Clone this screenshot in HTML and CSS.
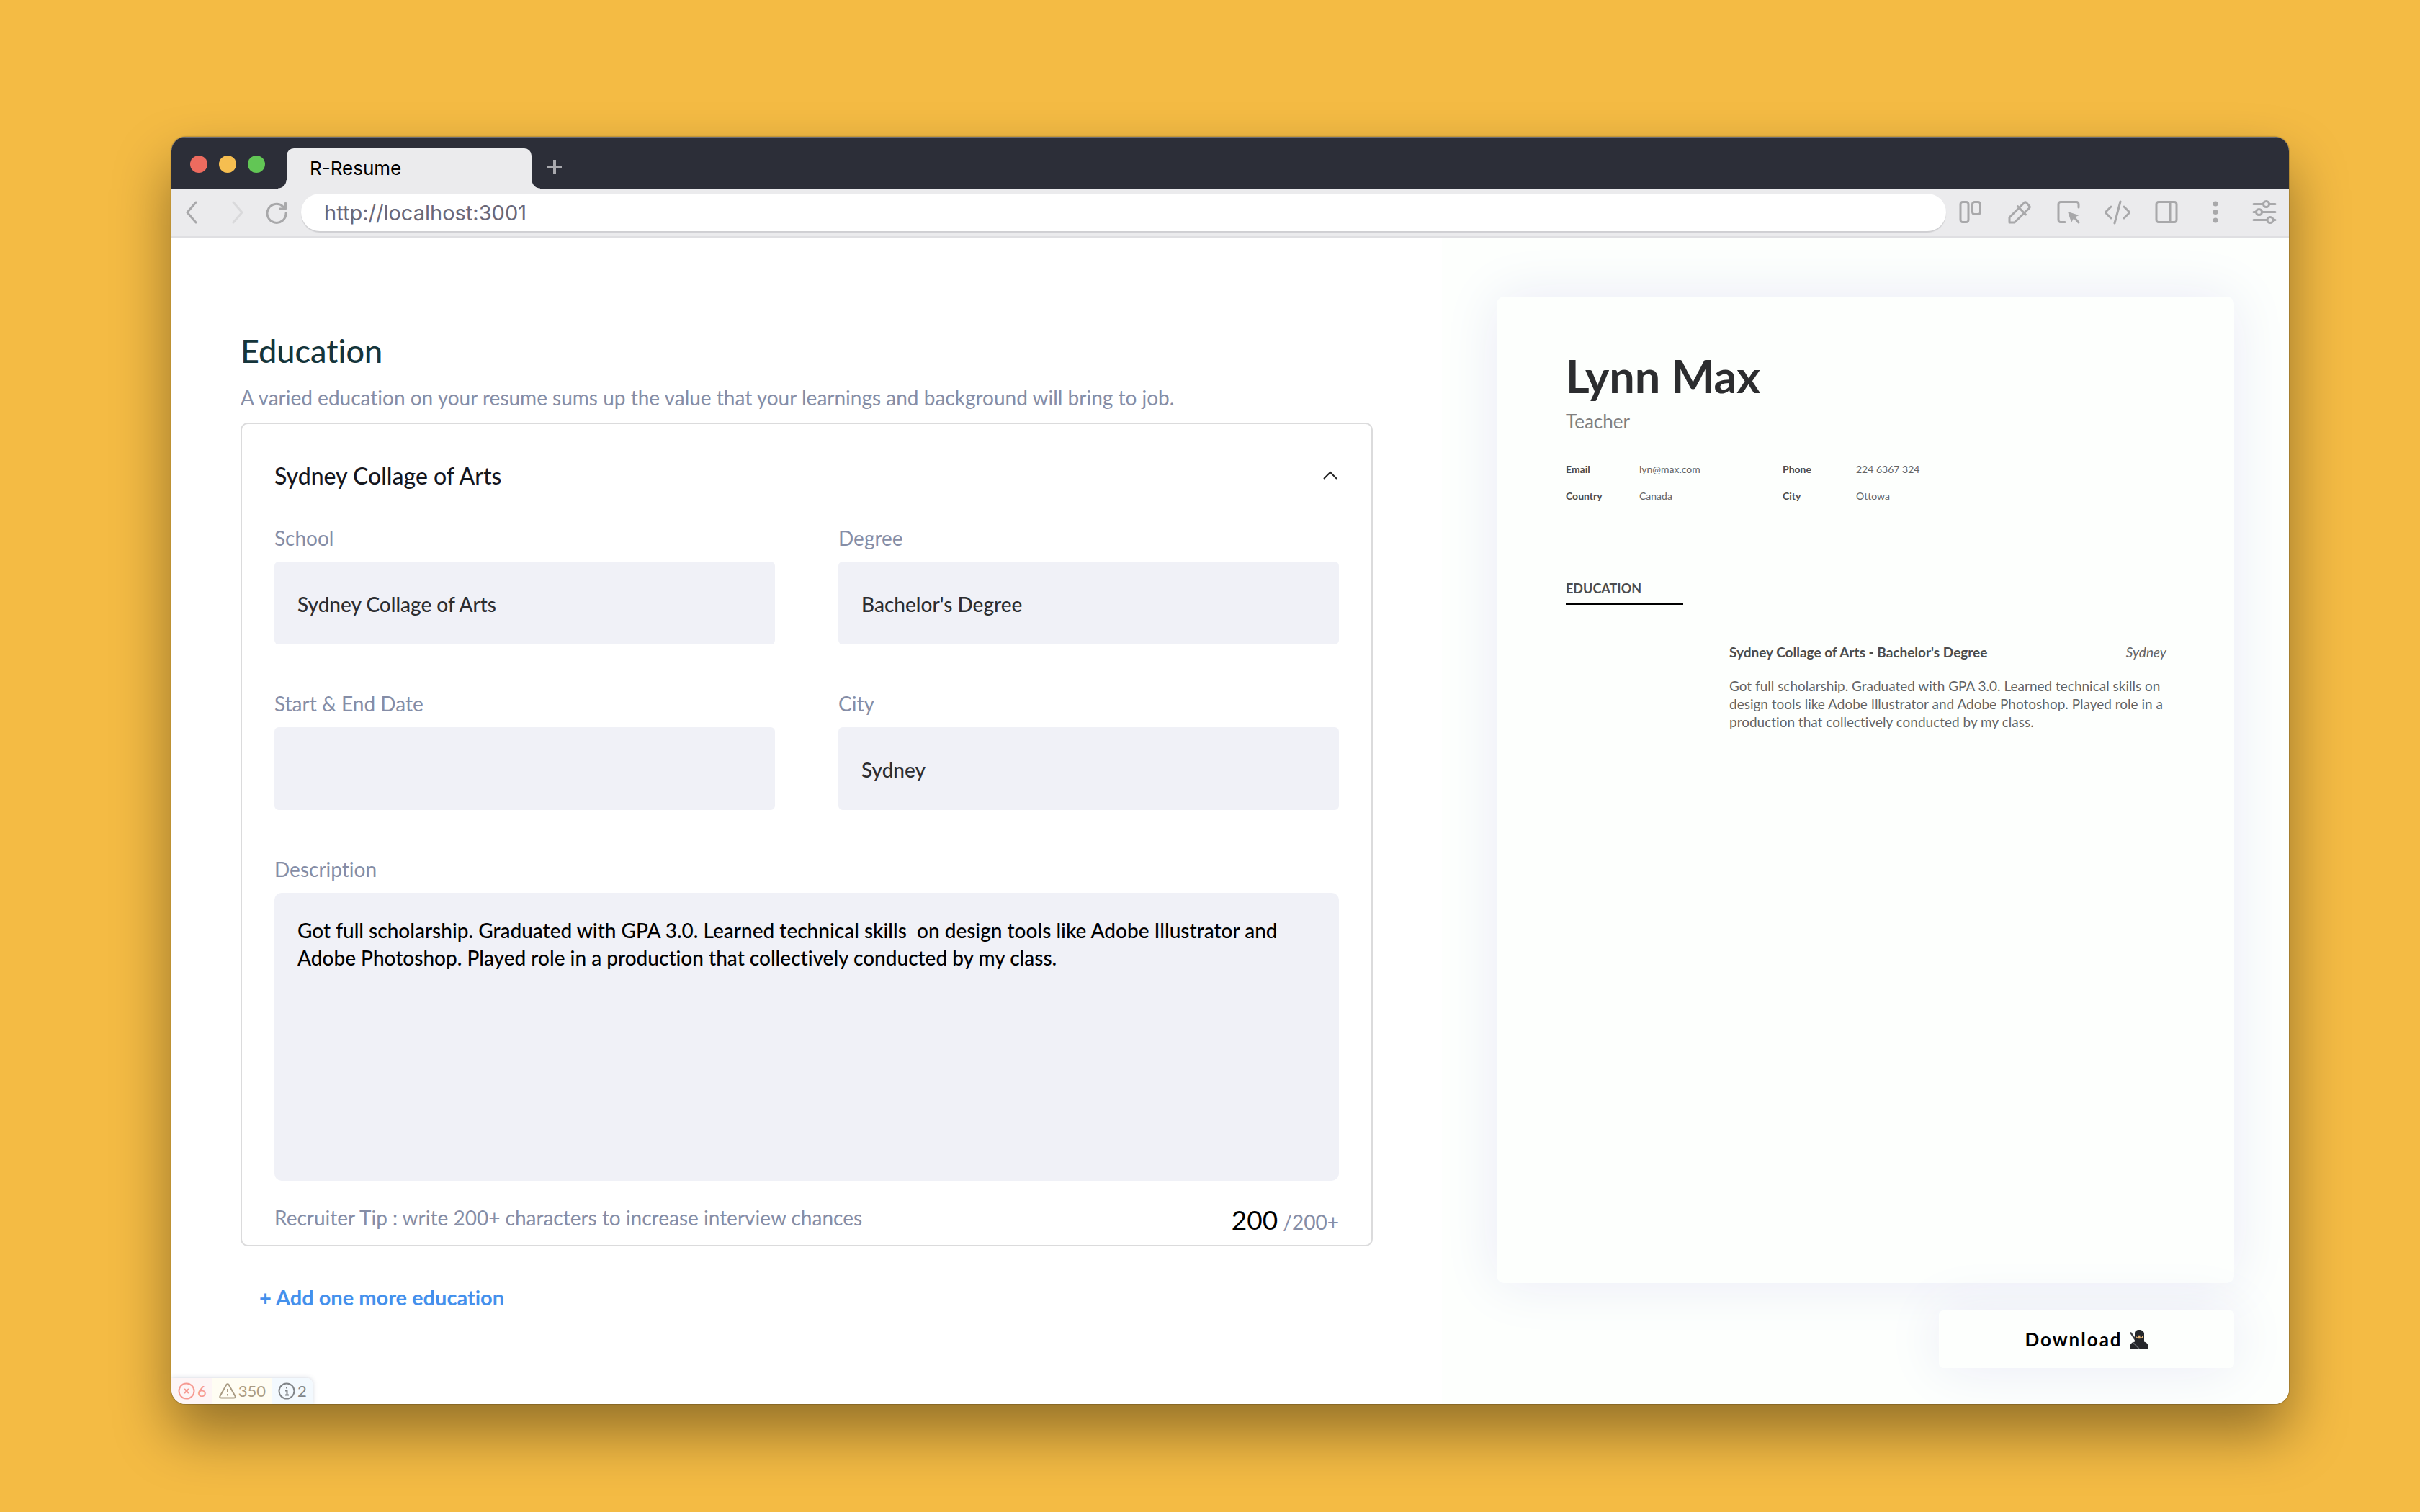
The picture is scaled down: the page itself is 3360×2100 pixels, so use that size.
FILE: index.html
```html
<!DOCTYPE html>
<html lang="en">
<head>
<meta charset="utf-8">
<meta name="viewport" content="width=device-width, initial-scale=1">
<title>R-Resume</title>
<link rel="stylesheet" href="styles.css">
</head>
<body>
<div class="window">
  <header class="tabbar">
    <div class="lights"><span class="light red"></span><span class="light amber"></span><span class="light green"></span></div>
    <div class="tab">R-Resume</div>
    <button class="new-tab" type="button" aria-label="New tab">
      <svg width="20" height="20" viewBox="0 0 20 20"><path d="M10 0v20M0 10h20" stroke="#a9a9ae" stroke-width="4"/></svg>
    </button>
  </header>
  <nav class="toolbar">
    <div class="history">
      <button type="button" aria-label="Back"><svg width="18" height="32" viewBox="0 0 18 32"><path d="M15 2 3 16l12 14"/></svg></button>
      <button type="button" class="dim" aria-label="Forward"><svg width="18" height="32" viewBox="0 0 18 32"><path d="m3 2 12 14L3 30"/></svg></button>
      <button type="button" aria-label="Reload"><svg width="32" height="32" viewBox="0 0 32 32"><path d="M29 17a13 13 0 1 1-4-9l3 3M28.500 3v8h-8"/></svg></button>
    </div>
    <input class="address" type="text" aria-label="Address" value="http://localhost:3001">
    <div class="tools">
      <button type="button" aria-label="Columns"><svg width="36" height="36" viewBox="0 0 36 36"><rect x="4" y="3.500" width="11" height="28" rx="3"/><rect x="20.500" y="3.500" width="11" height="17" rx="3"/></svg></button>
      <button type="button" aria-label="Pick colour"><svg width="36" height="36" viewBox="0 0 36 36"><path d="M4 32v-7l20.500-20.500q1.500-1.500 3 0l4 4.500q1.500 1.500 0 3L11 32zM15.500 9.500l11 11.500"/></svg></button>
      <button type="button" aria-label="Select element"><svg width="36" height="36" viewBox="0 0 36 36"><path d="M13 31.500H7a3 3 0 0 1-3-3V6.500a3 3 0 0 1 3-3h22a3 3 0 0 1 3 3V11M25 24l7 8"/><path class="solid" d="m17 17 15.500 5-6.500 3-4 7z"/></svg></button>
      <button type="button" aria-label="View source"><svg width="36" height="36" viewBox="0 0 36 36"><path d="m9 10-8 8 8 8M27 10l8 8-8 8M22 3l-8 30"/></svg></button>
      <button type="button" aria-label="Side panel"><svg width="36" height="36" viewBox="0 0 36 36"><rect x="4" y="3.500" width="28" height="28" rx="3"/><path d="M23 4v27"/></svg></button>
      <button type="button" aria-label="More"><svg width="36" height="36" viewBox="0 0 36 36"><g class="solid"><circle cx="18" cy="6" r="3.500"/><circle cx="18" cy="17.500" r="3.500"/><circle cx="18" cy="29" r="3.500"/></g></svg></button>
      <button type="button" aria-label="Settings"><svg width="36" height="36" viewBox="0 0 36 36"><path d="M3 6.500h13M25 6.500h8M3 17.500h3M15 17.500h18M3 28.500h18M30 28.500h3"/><circle cx="20.500" cy="6.500" r="4"/><circle cx="10.500" cy="17.500" r="4"/><circle cx="26" cy="28.500" r="4"/></svg></button>
    </div>
  </nav>
  <main class="app">
    <section class="editor">
      <h1>Education</h1>
      <p class="lead">A varied education on your resume sums up the value that your learnings and background will bring to job.</p>
      <form class="card">
        <div class="card-head">
          <h2>Sydney Collage of Arts</h2>
          <button type="button" class="toggle" aria-label="Collapse"><svg width="22" height="14" viewBox="0 0 22 14"><path d="m1 11 9-9 9 9" fill="none" stroke="#222" stroke-width="2"/></svg></button>
        </div>
        <div class="fields">
          <div class="field"><label for="school">School</label><input id="school" type="text" value="Sydney Collage of Arts"></div>
          <div class="field"><label for="degree">Degree</label><input id="degree" type="text" value="Bachelor's Degree"></div>
          <div class="field"><label for="dates">Start &amp; End Date</label><input id="dates" type="text"></div>
          <div class="field"><label for="city">City</label><input id="city" type="text" value="Sydney"></div>
          <div class="field wide"><label for="description">Description</label><textarea id="description">Got full scholarship. Graduated with GPA 3.0. Learned technical skills  on design tools like Adobe Illustrator and Adobe Photoshop. Played role in a production that collectively conducted by my class.</textarea></div>
        </div>
        <div class="card-foot">
          <p>Recruiter Tip : write 200+ characters to increase interview chances</p>
          <p class="counter"><strong>200</strong> /200+</p>
        </div>
      </form>
      <button type="button" class="add">+ Add one more education</button>
    </section>
    <aside class="preview">
      <article class="resume">
        <h2 class="name">Lynn Max</h2>
        <p class="role">Teacher</p>
        <dl class="contact">
          <dt>Email</dt><dd>lyn@max.com</dd><dt>Phone</dt><dd>224 6367 324</dd>
          <dt>Country</dt><dd>Canada</dd><dt>City</dt><dd>Ottowa</dd>
        </dl>
        <h3 class="section-title">EDUCATION</h3>
        <div class="entry">
          <div class="entry-head"><h4>Sydney Collage of Arts - Bachelor's Degree</h4><em>Sydney</em></div>
          <p>Got full scholarship. Graduated with GPA 3.0. Learned technical skills on design tools like Adobe Illustrator and Adobe Photoshop. Played role in a production that collectively conducted by my class.</p>
        </div>
      </article>
      <button type="button" class="download">Download
        <svg width="26" height="26" viewBox="0 0 26 26"><path d="M0 4l2-1 13 19-2 2z" fill="#3b3c40"/><path d="M0 26c0-6 2-8 7-9.500V5C7 1.500 9.500 0 13 0s6.500 1.500 7 5v11.500c4 1.500 6 3.500 6 9.500z" fill="#25272b"/><path d="M8.500 8.500q4.500-1.500 9.500 0v3q-5 1.500-9.500 0z" fill="#e9b878"/><path d="M9.500 9.500h2.500M14.500 9.500H17" stroke="#25272b" stroke-width="1.500"/><path d="m4 17 9 9" stroke="#66696f" stroke-width="1.500"/></svg>
      </button>
    </aside>
    <div class="status">
      <span class="errors"><svg width="24" height="24" viewBox="0 0 24 24"><circle cx="12" cy="12" r="10.500"/><path d="m9 9 6 6M15 9l-6 6"/></svg>6</span>
      <span class="warnings"><svg width="24" height="24" viewBox="0 0 24 24"><path d="M10.500 3a2 2 0 0 1 3 0l9 16q1 2.500-2 2.500h-17q-3 0-2-2.500zM12 9v4M12 16v2.500"/></svg>350</span>
      <span class="infos"><svg width="24" height="24" viewBox="0 0 24 24"><circle cx="12" cy="12" r="10.500"/><path d="M12 6.500v2M10 11.500h2.500v6M10 17.500h5"/></svg>2</span>
    </div>
  </main>
</div>
</body>
</html>
```
FILE: styles.css
```css
* { box-sizing: border-box; margin: 0; padding: 0; }

body {
  min-height: 100vh;
  display: flex;
  padding: 190px 182px 150px 238px;
  background: #f4bb44;
  font: 400 28px/36px Lato, "Noto Sans", sans-serif;
  font-variant-ligatures: none;
  color: #000;
}

button { border: 0; background: none; font: inherit; color: inherit; }
svg { display: block; flex: none; }

.window {
  flex: 1;
  min-width: 0;
  display: flex;
  flex-direction: column;
  border-radius: 20px;
  overflow: hidden;
  background: #fff;
  box-shadow: 0 0 2px rgba(0, 0, 0, .6), 0 40px 80px rgba(0, 0, 0, .4);
}

/* Browser chrome */
.tabbar {
  display: flex;
  height: 72px;
  background: #2c2e38;
  box-shadow: inset 0 2px #6b6d76;
}
.lights { display: flex; gap: 16px; padding: 26px 30px 0 26px; }
.light { width: 24px; height: 24px; border-radius: 50%; }
.red { background: #ed6b5f; }
.amber { background: #f6be50; }
.green { background: #62c655; }
.tab {
  position: relative;
  width: 340px;
  margin-top: 16px;
  padding: 9px 32px;
  border-radius: 10px 10px 0 0;
  background: #ebebed;
  font: 400 26px/38px Inter, sans-serif;
}
.tab::before, .tab::after {
  content: "";
  position: absolute;
  bottom: 0;
  width: 12px;
  height: 12px;
}
.tab::before { right: 100%; background: radial-gradient(circle at 0 0, transparent 11px, #ebebed 12px); }
.tab::after { left: 100%; background: radial-gradient(circle at 100% 0, transparent 11px, #ebebed 12px); }
.new-tab { padding: 12px 22px 0; }

.toolbar {
  display: flex;
  align-items: center;
  height: 68px;
  border-bottom: 2px solid #dfdfe2;
  background: #ebebed;
}
.toolbar svg { fill: none; stroke: #a8a8aa; stroke-width: 3px; stroke-linecap: round; stroke-linejoin: round; }
.toolbar .solid { fill: #a8a8aa; stroke: none; }
.toolbar .dim { margin-left: 16px; opacity: .25; }
.history { display: flex; justify-content: space-between; width: 180px; padding: 0 18px 0 19px; }
.address {
  flex: 1;
  min-width: 0;
  height: 52px;
  padding: 0 32px;
  border: 0;
  border-radius: 26px;
  background: #fff;
  box-shadow: 0 2px 1px #cfcfd2;
  font: 400 29px/36px Inter, sans-serif;
  color: #6a6879;
}
.tools { display: flex; gap: 32px; padding: 0 16px; }

/* App */
.app {
  position: relative;
  flex: 1;
  display: grid;
  grid-template-columns: 3fr 2fr;
}
.editor { padding: 131px 96px 32px; color: #858da6; }
h1 { margin-bottom: 21px; font-size: 45px; line-height: 52px; font-weight: 500; color: #15353b; }
.lead { margin-bottom: 17px; }
.card { padding: 52px 45px 11px; border: 2px solid #dbdbdc; border-radius: 10px; }
.card-head { display: flex; justify-content: space-between; align-items: center; margin-bottom: 48px; }
.card-head h2 { font-size: 32px; line-height: 40px; font-weight: 500; color: #15171f; }
.fields { display: grid; grid-template-columns: 1fr 1fr; gap: 64px 88px; }
.field { display: flex; flex-direction: column; gap: 15px; min-width: 0; }
.wide { grid-column: 1 / -1; }
.field input, .field textarea {
  width: 100%;
  border: 0;
  background: #f0f1f7;
  font: inherit;
  font-weight: 500;
  font-variant-ligatures: none;
}
.field input { height: 115px; padding: 3px 32px 0; border-radius: 6px; color: #2c2d30; }
.field textarea { height: 400px; padding: 33px 32px; border-radius: 10px; line-height: 38px; color: #000; resize: none; }
.card-foot { display: flex; justify-content: space-between; margin-top: 33px; }
.counter { line-height: 42px; }
.counter strong { font-size: 37px; font-weight: 400; color: #000; }
.add { margin: 53px 0 0 26px; font-size: 29px; font-weight: 700; color: #4490ec; }

/* Resume preview */
.preview {
  display: flex;
  flex-direction: column;
  align-items: flex-end;
  gap: 38px;
  padding: 82px 76px 50px;
  background: #fdfffd;
}
.resume, .download { background: #fdfffd; box-shadow: 0 0 80px #e9eaf6; }
.resume {
  width: 100%;
  flex: 1;
  padding: 74px 94px 74px 96px;
  border-radius: 10px;
  font-size: 19px;
  line-height: 25px;
  color: #646464;
}
.name { font-size: 63px; line-height: 72px; font-weight: 700; color: #2c2d2f; }
.role { margin-bottom: 38px; padding-top: 8px; font-size: 26px; line-height: 38px; color: #808080; }
.contact {
  display: grid;
  grid-template-columns: 102px 199px 102px 1fr;
  row-gap: 17px;
  margin-bottom: 106px;
  font-size: 14px;
  line-height: 20px;
}
dt { font-weight: 700; color: #4c4c4c; }
.section-title {
  width: 163px;
  padding-bottom: 8px;
  border-bottom: 2px solid #000;
  margin-bottom: 53px;
  font-size: 18px;
  color: #4c4c4c;
}
.entry { margin-left: 227px; }
.entry-head { display: flex; justify-content: space-between; margin-bottom: 22px; }
.entry-head h4 { font-size: 19px; color: #4c4c4c; }
.download {
  display: flex;
  justify-content: center;
  align-items: center;
  gap: 10px;
  width: 410px;
  height: 80px;
  border-radius: 6px;
  font-size: 26px;
  font-weight: 700;
  letter-spacing: 2px;
}

/* Page diagnostics, pinned over the corner of the viewport */
.status {
  position: absolute;
  left: 0;
  bottom: 0;
  display: flex;
  height: 36px;
  border-radius: 0 8px 0 0;
  overflow: hidden;
  box-shadow: 0 0 6px rgba(60, 80, 120, .25);
  font-size: 22px;
}
.status span { display: flex; align-items: center; gap: 3px; padding: 0 8px 0 9px; }
.status svg { fill: none; stroke: currentColor; stroke-width: 2px; stroke-linejoin: round; }
.errors { background: #fdf5f6; color: #f69a92; }
.warnings { background: #fffdf3; color: #aa9c84; }
.infos { background: #f3f9fe; color: #808488; }
```
